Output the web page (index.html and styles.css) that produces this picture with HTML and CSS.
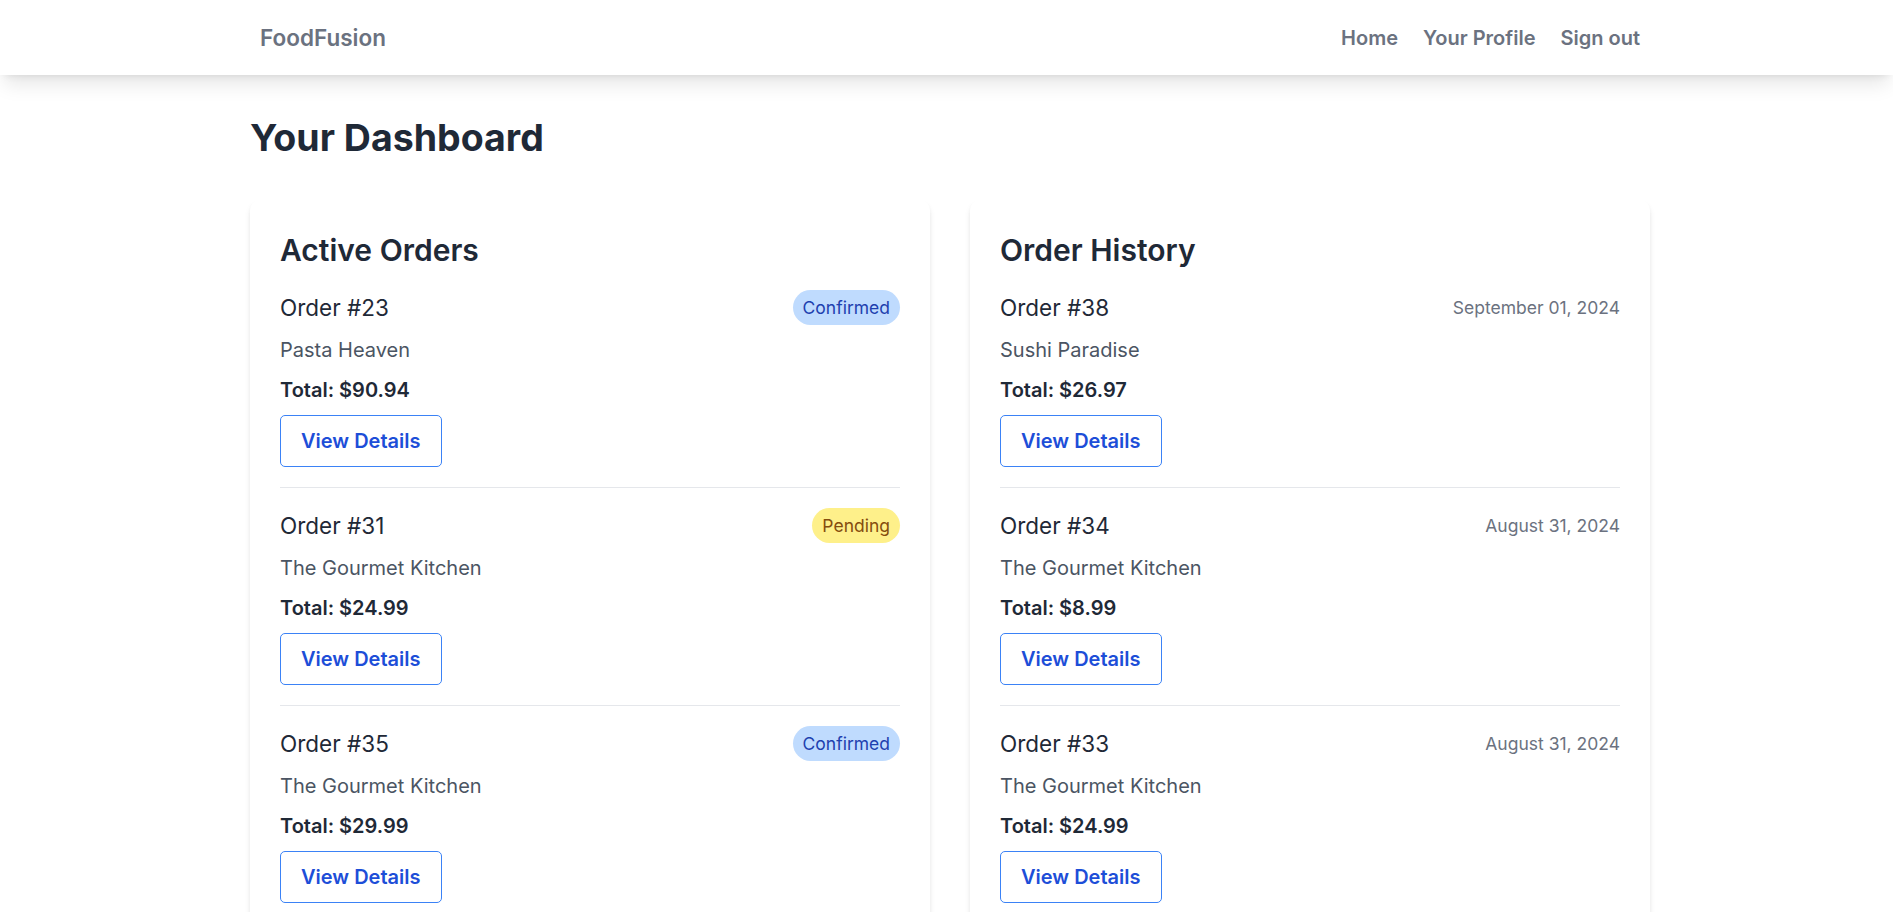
FILE: index.html
```html
<!DOCTYPE html>
<html lang="en">
<head>
<meta charset="utf-8">
<title>FoodFusion - Dashboard</title>
<link rel="stylesheet" href="styles.css">
</head>
<body>
<nav class="navbar">
  <div class="nav-inner">
    <a class="brand" href="#">FoodFusion</a>
    <div class="nav-links">
      <a href="#">Home</a>
      <a href="#">Your Profile</a>
      <a href="#">Sign out</a>
    </div>
  </div>
</nav>
<main class="page">
  <h1 class="page-title">Your Dashboard</h1>
  <div class="columns">
    <section class="card">
      <h2 class="card-title">Active Orders</h2>
      <div class="order">
        <div class="order-head">
          <span class="order-id">Order #23</span>
          <span class="badge badge-confirmed">Confirmed</span>
        </div>
        <p class="restaurant">Pasta Heaven</p>
        <p class="total">Total: $90.94</p>
        <a class="btn" href="#">View Details</a>
      </div>
      <div class="order">
        <div class="order-head">
          <span class="order-id">Order #31</span>
          <span class="badge badge-pending">Pending</span>
        </div>
        <p class="restaurant">The Gourmet Kitchen</p>
        <p class="total">Total: $24.99</p>
        <a class="btn" href="#">View Details</a>
      </div>
      <div class="order">
        <div class="order-head">
          <span class="order-id">Order #35</span>
          <span class="badge badge-confirmed">Confirmed</span>
        </div>
        <p class="restaurant">The Gourmet Kitchen</p>
        <p class="total">Total: $29.99</p>
        <a class="btn" href="#">View Details</a>
      </div>
    </section>
    <section class="card">
      <h2 class="card-title">Order History</h2>
      <div class="order">
        <div class="order-head">
          <span class="order-id">Order #38</span>
          <span class="date">September 01, 2024</span>
        </div>
        <p class="restaurant">Sushi Paradise</p>
        <p class="total">Total: $26.97</p>
        <a class="btn" href="#">View Details</a>
      </div>
      <div class="order">
        <div class="order-head">
          <span class="order-id">Order #34</span>
          <span class="date">August 31, 2024</span>
        </div>
        <p class="restaurant">The Gourmet Kitchen</p>
        <p class="total">Total: $8.99</p>
        <a class="btn" href="#">View Details</a>
      </div>
      <div class="order">
        <div class="order-head">
          <span class="order-id">Order #33</span>
          <span class="date">August 31, 2024</span>
        </div>
        <p class="restaurant">The Gourmet Kitchen</p>
        <p class="total">Total: $24.99</p>
        <a class="btn" href="#">View Details</a>
      </div>
    </section>
  </div>
</main>
</body>
</html>
```

FILE: styles.css
```css
* {
  box-sizing: border-box;
}

html, body {
  margin: 0;
  padding: 0;
  background: #ffffff;
}

body {
  font-family: "Inter", "Liberation Sans", sans-serif;
  color: #1f2937;
  padding-left: 7px;
}

a {
  text-decoration: none;
}

.navbar {
  background: #ffffff;
  height: 75px;
  margin-left: -7px;
  padding-left: 7px;
  box-shadow: 0 12.5px 18.75px -3.75px rgba(0, 0, 0, 0.1), 0 5px 7.5px -5px rgba(0, 0, 0, 0.1);
  position: relative;
  z-index: 1;
}

.nav-inner {
  width: 1380px;
  height: 100%;
  margin: 0 auto;
  display: flex;
  align-items: center;
  justify-content: space-between;
}

.brand {
  font-size: 22.5px;
  line-height: 35px;
  font-weight: 600;
  color: #6b7280;
}

.nav-links {
  display: flex;
  gap: 25px;
}

.nav-links a {
  font-size: 20px;
  line-height: 30px;
  font-weight: 600;
  color: #6b7280;
}

.page {
  width: 1400px;
  margin: 0 auto;
  padding-top: 40px;
}

.page-title {
  margin: 0 0 40px;
  font-size: 37.5px;
  line-height: 45px;
  font-weight: 700;
  color: #1f2937;
}

.columns {
  display: grid;
  grid-template-columns: 1fr 1fr;
  gap: 40px;
}

.card {
  background: #ffffff;
  border-radius: 10px;
  padding: 30px;
  box-shadow: 0 5px 7.5px -1.25px rgba(0, 0, 0, 0.1), 0 2.5px 5px -2.5px rgba(0, 0, 0, 0.1);
}

.card-title {
  margin: 0 0 20px;
  font-size: 30px;
  line-height: 40px;
  font-weight: 600;
  color: #1f2937;
}

.order {
  padding: 20px 0;
  border-bottom: 1px solid #e5e7eb;
}

.order:first-of-type {
  padding-top: 0;
}

.order-head {
  display: flex;
  align-items: center;
  justify-content: space-between;
  height: 35px;
}

.order-id {
  font-size: 22.5px;
  line-height: 35px;
  font-weight: 400;
  color: #1f2937;
}

.badge {
  font-size: 17.5px;
  line-height: 25px;
  padding: 5px 10px;
  border-radius: 999px;
}

.badge-confirmed {
  background: #bfdbfe;
  color: #1e40af;
}

.badge-pending {
  background: #fef08a;
  color: #854d0e;
}

.date {
  font-size: 17.5px;
  line-height: 25px;
  color: #6b7280;
}

.restaurant {
  margin: 10px 0 0;
  font-size: 20px;
  line-height: 30px;
  color: #4b5563;
}

.total {
  margin: 10px 0 0;
  font-size: 20px;
  line-height: 30px;
  font-weight: 600;
  color: #1f2937;
}

.btn {
  display: inline-block;
  margin-top: 10px;
  padding: 10px 20px;
  border: 1px solid #3b82f6;
  border-radius: 5px;
  font-size: 20px;
  line-height: 30px;
  font-weight: 600;
  color: #1d4ed8;
}
```
